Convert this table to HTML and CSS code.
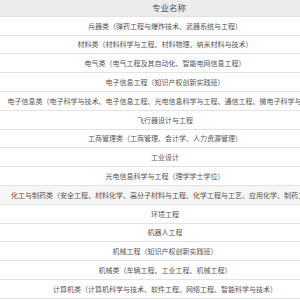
FILE: index.html
```html
<!DOCTYPE html>
<html lang="zh-CN">
<head>
<meta charset="utf-8">
<title>专业名称</title>
<link rel="stylesheet" href="styles.css">
</head>
<body>
<div class="table">
  <div class="row head"><span>专业名称</span></div>
  <div class="row"><span>兵器类（弹药工程与爆炸技术、武器系统与工程）</span></div>
  <div class="row"><span>材料类（材料科学与工程、材料物理、纳米材料与技术）</span></div>
  <div class="row"><span>电气类（电气工程及其自动化、智能电网信息工程）</span></div>
  <div class="row"><span>电子信息工程（知识产权创新实践班）</span></div>
  <div class="row"><span>电子信息类（电子科学与技术、电子信息工程、光电信息科学与工程、通信工程、微电子科学与工程）</span></div>
  <div class="row"><span>飞行器设计与工程</span></div>
  <div class="row"><span>工商管理类（工商管理、会计学、人力资源管理）</span></div>
  <div class="row"><span>工业设计</span></div>
  <div class="row"><span>光电信息科学与工程（理学学士学位）</span></div>
  <div class="row hover"><span>化工与制药类（安全工程、材料化学、高分子材料与工程、化学工程与工艺、应用化学、制药工程）</span></div>
  <div class="row"><span>环境工程</span></div>
  <div class="row"><span>机器人工程</span></div>
  <div class="row"><span>机械工程（知识产权创新实践班）</span></div>
  <div class="row"><span>机械类（车辆工程、工业工程、机械工程）</span></div>
  <div class="row"><span>计算机类（计算机科学与技术、软件工程、网络工程、智能科学与技术）</span></div>
</div>
</body>
</html>
```
FILE: styles.css
```css
html, body {
  margin: 0;
  padding: 0;
  overflow: hidden;
  background: #ffffff;
}
.table {
  width: 330px;
  margin-top: -1px;
  display: flex;
  flex-direction: column;
  font-family: "Noto Sans CJK SC", "Noto Sans", sans-serif;
  font-size: 7px;
  color: #555555;
}
.row {
  height: 17.8px;
  border-bottom: 1px solid #e3e3e3;
  display: flex;
  align-items: center;
  justify-content: center;
  white-space: nowrap;
  background: #ffffff;
}
.row.head {
  background: #ececec;
  font-size: 8.5px;
  color: #555555;
  padding-left: 8px;
  box-sizing: border-box;
  height: 17.8px;
}
.row.hover {
  background: #f6f6f6;
}
```
